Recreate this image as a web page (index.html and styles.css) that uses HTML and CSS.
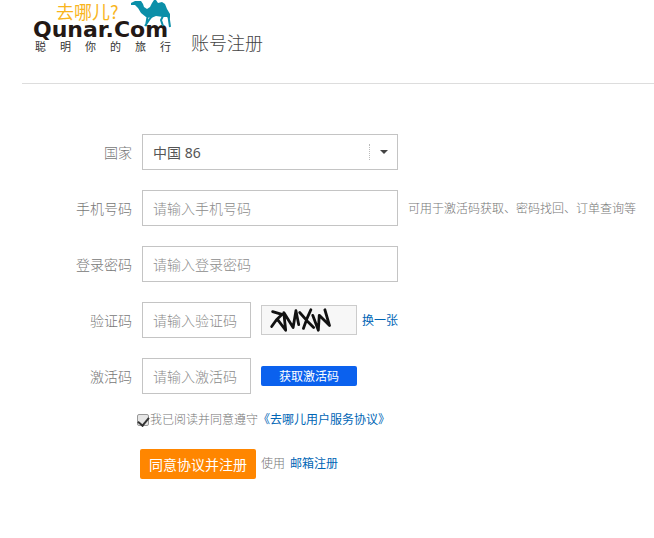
FILE: index.html
```html
<!DOCTYPE html>
<html lang="zh-CN">
<head>
<meta charset="utf-8">
<title>账号注册</title>
<link rel="stylesheet" href="styles.css">
</head>
<body>
<header class="header">
  <svg class="logo" viewBox="0 0 150 60" width="150" height="60" role="img" aria-label="去哪儿? Qunar.Com">
    <text class="logo-cn" x="34" y="19">去哪儿?</text>
    <text class="logo-en" x="11" y="37">Qunar.Com</text>
    <text class="logo-tag" x="13 38 63 88 113 138" y="51">聪明你的旅行</text>
    <path class="camel" d="M109 3 L113 1 L119 1 L121 4 L122 7 L125 9 L128 7 L130 3 L132 0 L134 0 L136 3 L140 2 L143 4 L145 9 L148 14 L148 19 L145 17 L141 17 L134 16 L129 18 L124 17 L119 13 L116 8 L113 5 L109 5 Z"/>
    <path class="camel-legs" d="M126 14 L125 20 L124 26 M131 15 L127 20 L123 26 M142 14 L139 20 L141 26 M146 14 L147 20 L148 27"/>
  </svg>
  <h1 class="title">账号注册</h1>
</header>
<main>
  <form class="form">
    <div class="row">
      <label class="label" for="country">国家</label>
      <div class="select">
        <select class="box" id="country"><option>中国 86</option></select>
        <span class="arrow"></span>
      </div>
    </div>
    <div class="row">
      <label class="label" for="phone">手机号码</label>
      <input class="box" id="phone" type="tel" placeholder="请输入手机号码">
      <span class="hint">可用于激活码获取、密码找回、订单查询等</span>
    </div>
    <div class="row">
      <label class="label" for="password">登录密码</label>
      <input class="box" id="password" type="password" placeholder="请输入登录密码">
    </div>
    <div class="row">
      <label class="label" for="captcha">验证码</label>
      <input class="box short" id="captcha" type="text" placeholder="请输入验证码">
      <svg class="captcha" viewBox="0 0 96 30" width="96" height="30" role="img" aria-label="验证码图片">
        <path d="M9 6 L19 9 L13 15 L8 22 M14 14 L23 26 L21 7 L31 23 L34 5 L37 20 M38 7 L46 16 L53 23 M50 4 L46 13 L42 24 M52 10 L58 26 L59 10 L70 21 L65 4"/>
      </svg>
      <a class="link refresh" href="#">换一张</a>
    </div>
    <div class="row">
      <label class="label" for="code">激活码</label>
      <input class="box short" id="code" type="text" placeholder="请输入激活码">
      <button class="get-code" type="button">获取激活码</button>
    </div>
    <div class="agree">
      <input class="check" id="agree" type="checkbox" checked>
      <label for="agree">我已阅读并同意遵守</label>
      <a class="link" href="#">《去哪儿用户服务协议》</a>
    </div>
    <div class="actions">
      <button class="submit" type="submit">同意协议并注册</button>
      <span class="use">使用</span>
      <a class="link" href="#">邮箱注册</a>
    </div>
  </form>
</main>
</body>
</html>
```
FILE: styles.css
```css
* {
  box-sizing: border-box;
}

body,
button,
input,
select {
  font-family: "Noto Sans", "Noto Sans CJK SC", sans-serif;
  font-weight: 300;
}

body {
  margin: 0;
  background: #fff;
  color: #777;
  font-size: 12px;
  line-height: 20px;
}

.header {
  display: flex;
  align-items: flex-end;
  gap: 19px;
  height: 84px;
  margin-left: 22px;
  padding-bottom: 23px;
  border-bottom: 1px solid #ddd;
}

.logo {
  flex: none;
}

.logo-cn {
  fill: #f9b51c;
  font-family: "Noto Sans CJK SC", sans-serif;
  font-size: 18px;
  font-weight: 400;
}

.logo-en {
  fill: #231815;
  font-family: "DejaVu Sans", sans-serif;
  font-size: 22px;
  font-weight: 700;
}

.logo-tag {
  fill: #333;
  font-family: "Noto Sans CJK SC", sans-serif;
  font-size: 11px;
  font-weight: 400;
}

.camel {
  fill: #0b8fa8;
}

.camel-legs {
  fill: none;
  stroke: #0b8fa8;
  stroke-width: 2;
}

.title {
  margin: 0;
  padding-bottom: 4px;
  color: #444;
  font-size: 18px;
  font-weight: 300;
  line-height: 26px;
}

.form {
  display: flex;
  flex-direction: column;
  gap: 20px;
  padding: 50px 0 0 22px;
}

.row {
  display: flex;
  align-items: center;
  gap: 10px;
}

.label {
  flex: none;
  width: 110px;
  padding-top: 2px;
  font-size: 14px;
  text-align: right;
}

.box {
  flex: none;
  width: 256px;
  height: 36px;
  padding: 0 10px;
  border: 1px solid #c4c4c4;
  border-radius: 0;
  background: #fff;
  color: #555;
  font-size: 14px;
  appearance: none;
}

.box::placeholder {
  color: #8c8c8c;
}

.short {
  width: 109px;
}

.select {
  position: relative;
}

.select .box {
  display: block;
  font-weight: 400;
}

.arrow {
  position: absolute;
  top: 10px;
  right: 9px;
  width: 20px;
  height: 16px;
  border-left: 1px dotted #bbb;
  pointer-events: none;
}

.arrow::after {
  content: "";
  position: absolute;
  top: 6px;
  right: 1px;
  border: 4px solid transparent;
  border-top-color: #444;
  border-bottom: 0;
}

.hint {
  padding-top: 2px;
  white-space: nowrap;
}

.captcha {
  flex: none;
  border: 1px solid #ccc;
  background: #f7f7f7;
}

.captcha path {
  fill: none;
  stroke: #111;
  stroke-width: 3;
  stroke-linecap: round;
  stroke-linejoin: round;
}

.link {
  color: #0065b5;
  font-weight: 400;
  text-decoration: none;
}

.refresh {
  margin-left: -5px;
  padding-top: 2px;
}

.get-code {
  width: 96px;
  height: 20px;
  padding: 2px 0 0;
  border: 0;
  border-radius: 2px;
  background: #0b61ee;
  color: #fff;
  font-size: 12px;
  font-weight: 400;
  line-height: 18px;
}

.agree {
  display: flex;
  align-items: center;
  margin: -4px 0 0 115px;
}

.check {
  display: grid;
  place-items: start center;
  appearance: none;
  width: 12px;
  height: 12px;
  margin: 0 1px 0 0;
  border: 1px solid #999;
  border-radius: 2px;
  background: #e6e6e6;
}

.check:checked::after {
  content: "";
  width: 5px;
  height: 9px;
  border: solid #333;
  border-width: 0 2px 2px 0;
  transform: rotate(40deg);
}

.actions {
  display: flex;
  align-items: center;
  gap: 5px;
  margin: -1px 0 0 118px;
}

.submit {
  width: 116px;
  height: 30px;
  padding: 0;
  border: 0;
  border-radius: 2px;
  background: #ff8600;
  color: #fff;
  font-size: 14px;
  font-weight: 400;
}
```
